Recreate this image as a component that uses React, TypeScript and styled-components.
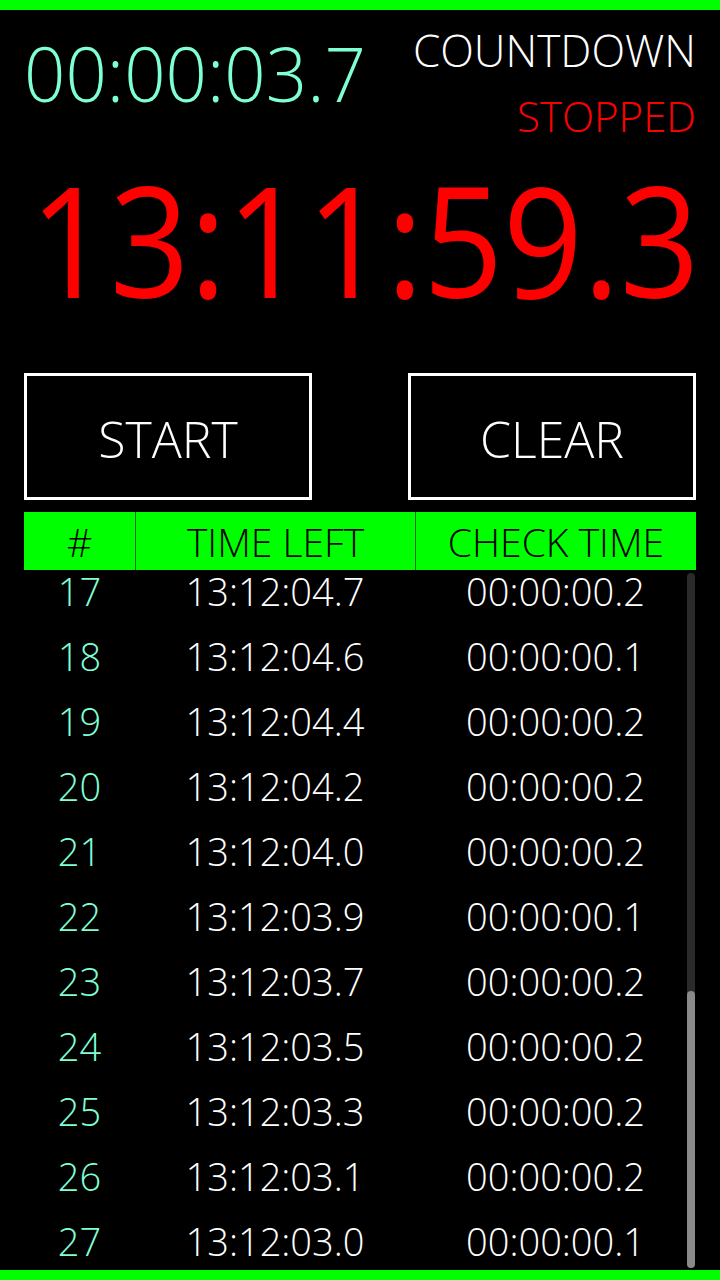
import React from 'react';
import styled, { createGlobalStyle } from 'styled-components';

const GlobalStyle = createGlobalStyle`
  html, body {
    margin: 0;
    padding: 0;
    background: #000;
  }
  body {
    font-family: "Open Sans", "Noto Sans", "Liberation Sans", sans-serif;
    color: #fff;
  }
`;

const AQUA = '#7fffd4';
const LIME = '#00ff00';
const RED = '#ff0000';

const ROW_HEIGHT = 65;
const LIST_HEIGHT = 700;
const VISIBLE_ROWS = 11;

const Screen = styled.div`
  width: 720px;
  height: 1280px;
  display: flex;
  flex-direction: column;
  background: #000;
  overflow: hidden;
`;

const EdgeBar = styled.div`
  height: 10px;
  flex: none;
  background: ${LIME};
`;

const TopRow = styled.div`
  display: flex;
  justify-content: space-between;
  align-items: flex-start;
  padding: 0 24px;
`;

// the watch font has narrower digits than Open Sans, so squeeze them a bit
const Digits = styled.span<{ $sx: number; $origin: string }>`
  display: inline-block;
  white-space: nowrap;
  transform: scaleX(${(p) => p.$sx});
  transform-origin: ${(p) => p.$origin};
`;

const SmallClock = styled.div`
  margin-top: 25px;
  font-size: 76px;
  line-height: 76px;
  font-weight: 300;
  color: ${AQUA};
`;

const Status = styled.div`
  margin-top: 8px;
  display: flex;
  flex-direction: column;
  align-items: flex-end;
`;

const StatusLine = styled.div<{ $color: string; $size: number }>`
  font-size: ${(p) => p.$size}px;
  line-height: 65px;
  font-weight: 300;
  color: ${(p) => p.$color};
`;

const BigClock = styled.div`
  margin-top: 13px;
  padding-right: 20px;
  display: flex;
  justify-content: flex-end;
  font-size: 154px;
  line-height: 154px;
  font-weight: 400;
  color: ${RED};
`;

const ButtonRow = styled.div`
  margin-top: 58px;
  display: flex;
  justify-content: space-between;
  padding: 0 24px;
`;

const ActionButton = styled.button`
  width: 288px;
  height: 127px;
  box-sizing: border-box;
  border: 3px solid #fff;
  background: #000;
  color: #fff;
  font-family: inherit;
  font-size: 50px;
  font-weight: 300;
  padding: 4px 0 0;
  cursor: pointer;
`;

const Table = styled.div`
  margin: 12px 24px 0;
  display: flex;
  flex-direction: column;
`;

const Grid = styled.div`
  display: grid;
  grid-template-columns: 111px 280px 1fr;
`;

const HeaderRow = styled(Grid)`
  height: 58px;
  background: ${LIME};
`;

const HeaderCell = styled.div<{ $divider?: boolean }>`
  display: flex;
  align-items: center;
  justify-content: center;
  font-size: 39px;
  font-weight: 300;
  color: #000;
  border-left: ${(p) => (p.$divider ? '1px solid #0a6e0a' : 'none')};
`;

const ListWrap = styled.div`
  position: relative;
  height: ${LIST_HEIGHT}px;
`;

const List = styled.div`
  height: 100%;
  overflow: hidden;
  display: flex;
  flex-direction: column;
  justify-content: flex-end;
`;

const Row = styled(Grid)`
  flex: none;
  height: ${ROW_HEIGHT}px;
  box-sizing: border-box;
  padding-top: 16px;
  line-height: 40px;
  font-size: 38px;
  font-weight: 300;
`;

const Cell = styled.div<{ $accent?: boolean }>`
  text-align: center;
  white-space: nowrap;
  color: ${(p) => (p.$accent ? AQUA : '#fff')};
`;

const ScrollTrack = styled.div`
  position: absolute;
  top: 3px;
  bottom: 2px;
  right: 1px;
  width: 8px;
  border-radius: 4px;
  background: #2a2a2a;
  display: flex;
  flex-direction: column;
  justify-content: flex-end;
`;

const ScrollThumb = styled.div`
  width: 100%;
  border-radius: 4px;
  background: #8a8a8a;
`;

type Lap = { left: string; check: string };

const laps: Lap[] = [
  { left: '13:12:07.9', check: '00:00:00.2' },
  { left: '13:12:07.7', check: '00:00:00.2' },
  { left: '13:12:07.5', check: '00:00:00.2' },
  { left: '13:12:07.3', check: '00:00:00.2' },
  { left: '13:12:07.1', check: '00:00:00.2' },
  { left: '13:12:06.9', check: '00:00:00.2' },
  { left: '13:12:06.7', check: '00:00:00.2' },
  { left: '13:12:06.5', check: '00:00:00.2' },
  { left: '13:12:06.3', check: '00:00:00.2' },
  { left: '13:12:06.1', check: '00:00:00.2' },
  { left: '13:12:05.9', check: '00:00:00.2' },
  { left: '13:12:05.7', check: '00:00:00.2' },
  { left: '13:12:05.5', check: '00:00:00.2' },
  { left: '13:12:05.3', check: '00:00:00.2' },
  { left: '13:12:05.1', check: '00:00:00.2' },
  { left: '13:12:04.9', check: '00:00:00.2' },
  { left: '13:12:04.7', check: '00:00:00.2' },
  { left: '13:12:04.6', check: '00:00:00.1' },
  { left: '13:12:04.4', check: '00:00:00.2' },
  { left: '13:12:04.2', check: '00:00:00.2' },
  { left: '13:12:04.0', check: '00:00:00.2' },
  { left: '13:12:03.9', check: '00:00:00.1' },
  { left: '13:12:03.7', check: '00:00:00.2' },
  { left: '13:12:03.5', check: '00:00:00.2' },
  { left: '13:12:03.3', check: '00:00:00.2' },
  { left: '13:12:03.1', check: '00:00:00.2' },
  { left: '13:12:03.0', check: '00:00:00.1' },
];

export default function App() {
  const thumbPct = Math.min(100, (LIST_HEIGHT / (laps.length * ROW_HEIGHT)) * 100);
  // list is scrolled to the end: only the last rows are in view
  const firstVisible = Math.max(0, laps.length - VISIBLE_ROWS);
  const visible = laps.slice(firstVisible);

  return (
    <>
      <GlobalStyle />
      <Screen>
        <EdgeBar />
        <TopRow>
          <SmallClock>
            <Digits $sx={0.955} $origin="left center">00:00:03.7</Digits>
          </SmallClock>
          <Status>
            <StatusLine $color="#fff" $size={44}>COUNTDOWN</StatusLine>
            <StatusLine $color={RED} $size={42}>STOPPED</StatusLine>
          </Status>
        </TopRow>
        <BigClock>
          <Digits $sx={0.908} $origin="right center">13:11:59.3</Digits>
        </BigClock>
        <ButtonRow>
          <ActionButton>START</ActionButton>
          <ActionButton>CLEAR</ActionButton>
        </ButtonRow>
        <Table>
          <HeaderRow>
            <HeaderCell>#</HeaderCell>
            <HeaderCell $divider>TIME LEFT</HeaderCell>
            <HeaderCell $divider>CHECK TIME</HeaderCell>
          </HeaderRow>
          <ListWrap>
            <List>
              {visible.map((lap, i) => (
                <Row key={firstVisible + i}>
                  <Cell $accent>{firstVisible + i + 1}</Cell>
                  <Cell>{lap.left}</Cell>
                  <Cell>{lap.check}</Cell>
                </Row>
              ))}
            </List>
            <ScrollTrack>
              <ScrollThumb style={{ height: `${thumbPct}%` }} />
            </ScrollTrack>
          </ListWrap>
        </Table>
        <EdgeBar />
      </Screen>
    </>
  );
}
